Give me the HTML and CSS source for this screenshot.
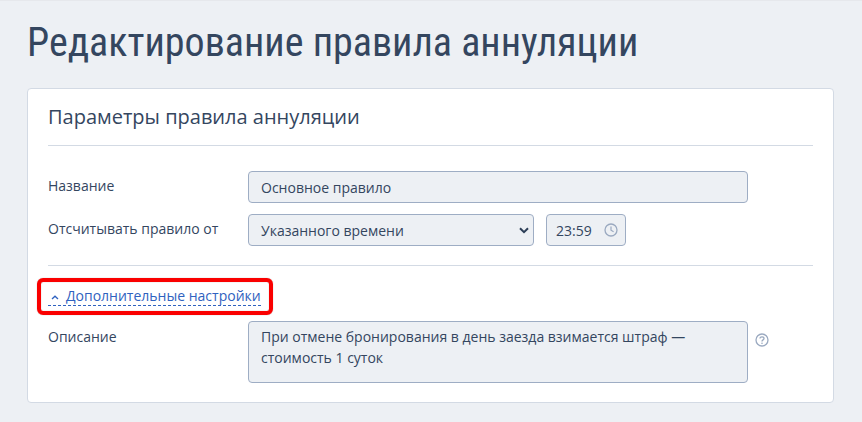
FILE: index.html
```html
<!DOCTYPE html>
<html lang="ru">
<head>
    <meta charset="UTF-8">
    <meta name="viewport" content="width=device-width, initial-scale=1.0">
    <title>Редактирование правила аннуляции</title>
    <link rel="stylesheet" href="styles.css">
</head>
<body>
    <div class="topline"></div>
    <div class="wrapper">
        <h1 class="page-title">Редактирование правила аннуляции</h1>
        <div class="card">
            <h2 class="card-title">Параметры правила аннуляции</h2>
            <div class="row row-name">
                <label class="row-label">Название</label>
                <div class="field field-wide">Основное правило</div>
            </div>
            <div class="row row-from">
                <label class="row-label">Отсчитывать правило от</label>
                <div class="field field-select">
                    <span>Указанного времени</span>
                    <svg class="chevron" width="10" height="7" viewBox="0 0 10 7"><path d="M1 1.200 5 5.200 9 1.200" fill="none" stroke="#2c3e57" stroke-width="2"/></svg>
                </div>
                <div class="field field-time">
                    <span>23:59</span>
                    <svg width="14" height="14" viewBox="0 0 14 14"><circle cx="7" cy="7" r="6" fill="none" stroke="#9aa9c0" stroke-width="1.300"/><path d="M7 3.400V7.200L9.600 8.800" fill="none" stroke="#9aa9c0" stroke-width="1.200"/></svg>
                </div>
            </div>
            <div class="divider"></div>
            <div class="more">
                <a class="more-link" href="#">
                    <svg class="more-icon" width="8" height="5" viewBox="0 0 8 5"><path d="M1 4 4 1.200 7 4" fill="none" stroke="#2f62c0" stroke-width="1.300"/></svg>
                    <span>Дополнительные настройки</span>
                </a>
                <div class="highlight"></div>
            </div>
            <div class="row row-desc">
                <label class="row-label">Описание</label>
                <div class="field field-wide field-area">При отмене бронирования в день заезда взимается штраф —<br>стоимость 1 суток</div>
                <svg class="help" width="14" height="14" viewBox="0 0 14 14"><circle cx="7" cy="7" r="6" fill="none" stroke="#9aa9c0" stroke-width="1.300"/><path d="M5 5.600C5 4.400 5.900 3.800 7 3.800S9 4.500 9 5.500C9 6.900 7 6.900 7 8.400" fill="none" stroke="#9aa9c0" stroke-width="1.300"/><circle cx="7" cy="10.200" r=".8" fill="#9aa9c0"/></svg>
            </div>
        </div>
    </div>
</body>
</html>
```

FILE: styles.css
```css
html, body{
    margin: 0;
    height: 100%;
}
body{
    background-color: #edf0f4;
    font-family: "Open Sans", "Noto Sans", sans-serif;
    font-size: 14px;
    color: #34465f;
    overflow: hidden;
}
.topline{
    height: 1px;
    background-color: #e6e8ec;
}
.wrapper{
    padding: 17px 28px 0 27px;
}
.page-title{
    margin: 0;
    font-family: Roboto, sans-serif;
    font-weight: 400;
    font-size: 40px;
    line-height: 50px;
    font-stretch: 75%;
    color: #34465f;
    white-space: nowrap;
}
.card{
    margin-top: 20px;
    height: 315px;
    box-sizing: border-box;
    padding: 0 20px;
    background-color: #fff;
    border: 1px solid #d3dae4;
    border-radius: 4px;
}
.card-title{
    margin: 0;
    padding: 14px 0 14px;
    font-size: 20px;
    font-weight: 400;
    line-height: 28px;
    border-bottom: 1px solid #d3dae4;
}
.row{
    display: flex;
    align-items: flex-start;
}
.row-name{
    margin-top: 25px;
}
.row-from{
    margin-top: 11px;
}
.row-label{
    width: 200px;
    flex: none;
    line-height: 20px;
    padding-top: 5px;
}
.row-desc .row-label{
    padding-top: 6px;
}
.field{
    box-sizing: border-box;
    height: 32px;
    display: flex;
    align-items: center;
    justify-content: space-between;
    padding: 0 12px;
    background-color: #edf0f4;
    border: 1px solid #9eadc4;
    border-radius: 4px;
}
.field-wide{
    width: 500px;
}
.field-select{
    width: 286px;
    padding-right: 4px;
}
.field-time{
    width: 80px;
    margin-left: 12px;
    padding-right: 7px;
    padding-left: 9px;
}
.field-area{
    height: 62px;
    display: block;
    padding: 4px 12px;
    line-height: 21px;
}
.divider{
    margin-top: 19px;
    border-top: 1px solid #d3dae4;
}
.more{
    position: relative;
    margin-top: 20px;
    height: 20px;
}
.more-link{
    display: inline-flex;
    align-items: center;
    gap: 7px;
    height: 19px;
    padding-left: 3px;
    line-height: 19px;
    color: #2f62c0;
    text-decoration: none;
    border-bottom: 1px dashed #2f62c0;
    vertical-align: top;
}
.more-icon{
    margin-top: 3px;
}
.highlight{
    position: absolute;
    left: -11px;
    top: -8px;
    width: 236px;
    height: 37px;
    box-sizing: border-box;
    border: 4px solid #fa0000;
    border-radius: 6px;
    box-shadow: 0 0 1px rgba(0, 0, 0, .4), inset 0 0 1px rgba(0, 0, 0, .4);
}
.row-desc{
    margin-top: 15px;
}
.help{
    margin: 12px 0 0 7px;
}
```
